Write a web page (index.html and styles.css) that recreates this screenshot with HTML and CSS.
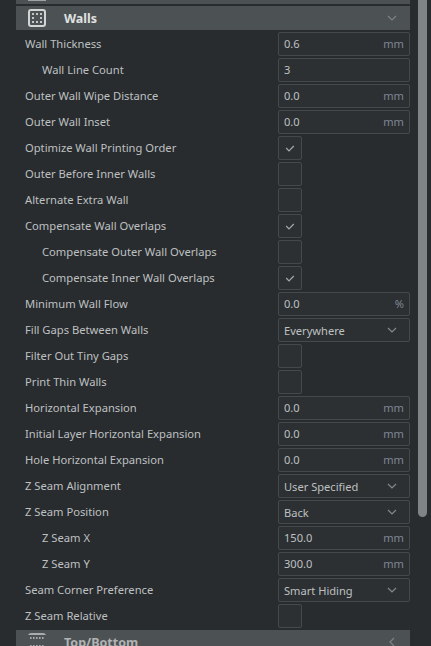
FILE: index.html
```html
<!DOCTYPE html>
<html lang="en">
<head>
<meta charset="utf-8">
<title>Print settings</title>
<link rel="stylesheet" href="styles.css">
</head>
<body>
<main class="panel">
  <div class="list" id="list">
    <div class="category previous"><span class="stub"></span></div>
    <div class="category">
      <svg class="cat-icon" width="18" height="18" viewBox="0 0 18 18"><rect x="1" y="1" width="16" height="16" rx="2" fill="none" stroke="#d3d4d4" stroke-width="2"/><path d="M4 5h2M8 5h2M12 5h2M4 9h2M12 9h2M4 13h2M8 13h2M12 13h2" stroke="#c4c6c6" stroke-width="2"/></svg>
      <h2 class="title">Walls</h2>
      <svg class="chevron" width="10" height="10" viewBox="0 0 10 10"><path d="M1 3l4 4 4-4"/></svg>
    </div>
    <div class="settings" id="settings"></div>
    <div class="category next">
      <svg class="cat-icon" width="18" height="18" viewBox="0 0 18 18"><path d="M0 2Q1 0 3 0H15Q17 0 18 2Z" fill="#aaacac"/><path d="M2 5h1.6M5 5h1.6M8 5h1.6M11 5h1.6M14 5h1.6M2 13h1.6M5 13h1.6M8 13h1.6M11 13h1.6M14 13h1.6" stroke="#a4a7a7" stroke-width="2"/></svg>
      <h2 class="title">Top/Bottom</h2>
      <svg class="chevron" width="10" height="10" viewBox="0 0 10 10"><path d="M7 1L3 5l4 4"/></svg>
    </div>
  </div>
  <div class="scrollbar"></div>
</main>
<script src="script.js"></script>
</body>
</html>
```
FILE: styles.css
```css
* { box-sizing: border-box; }
body {
  margin: 0;
  height: 646px;
  overflow: hidden;
  background: #282c2f;
  color: #bfc0c1;
  font: 11.2px/24px "Noto Sans", sans-serif;
}
.panel {
  display: flex;
  align-items: flex-start;
  gap: 8px;
  padding-left: 16px;
}
.list {
  display: flex;
  flex-direction: column;
  gap: 2px;
  width: 394px;
}
.category {
  display: flex;
  align-items: center;
  height: 24px;
  padding: 0 13px 0 12px;
  background: #4c5153;
}
.previous { height: 4px; align-items: flex-start; }
.stub { width: 18px; height: 1px; background: #a0a2a3; }
.cat-icon { flex: none; margin-right: 18px; }
.title {
  flex: 1;
  margin: 0;
  padding-top: 2px;
  font-size: 12.5px;
  font-weight: 700;
  color: #e0e1e1;
}
.next .title { color: #b1b3b4; }
.chevron { flex: none; fill: none; stroke: #85898b; stroke-width: 1.2; }
.category .chevron { stroke: #7e8284; }
.settings { display: grid; gap: 2px; }
.row {
  display: flex;
  justify-content: space-between;
  height: 24px;
  padding-left: 9px;
  white-space: nowrap;
}
.child { padding-left: 26px; }
.slot { width: 132px; }
.control {
  display: flex;
  align-items: center;
  justify-content: space-between;
  height: 24px;
  padding: 0 5px;
  border: 1px solid #46494c;
  border-radius: 2px;
  background: #2c3033;
  font-size: 11.1px;
}
.unit { color: #7f8592; }
.select { padding-right: 12px; }
.select span { padding-top: 2px; }
.check { width: 24px; justify-content: center; padding: 0 1px 0 0; }
.tick { fill: none; stroke: #a5a8a9; stroke-width: 1.2; }
.scrollbar {
  width: 9px;
  height: 517px;
  border-radius: 0 0 5px 5px;
  background: #808486;
}
```
FILE: script.js
```js
const rows = [
  ["Wall Thickness", "input", "0.6", "mm"],
  ["Wall Line Count", "input", "3", "", true],
  ["Outer Wall Wipe Distance", "input", "0.0", "mm"],
  ["Outer Wall Inset", "input", "0.0", "mm"],
  ["Optimize Wall Printing Order", "check", true],
  ["Outer Before Inner Walls", "check", false],
  ["Alternate Extra Wall", "check", false],
  ["Compensate Wall Overlaps", "check", true],
  ["Compensate Outer Wall Overlaps", "check", false, "", true],
  ["Compensate Inner Wall Overlaps", "check", true, "", true],
  ["Minimum Wall Flow", "input", "0.0", "%"],
  ["Fill Gaps Between Walls", "select", "Everywhere"],
  ["Filter Out Tiny Gaps", "check", false],
  ["Print Thin Walls", "check", false],
  ["Horizontal Expansion", "input", "0.0", "mm"],
  ["Initial Layer Horizontal Expansion", "input", "0.0", "mm"],
  ["Hole Horizontal Expansion", "input", "0.0", "mm"],
  ["Z Seam Alignment", "select", "User Specified"],
  ["Z Seam Position", "select", "Back"],
  ["Z Seam X", "input", "150.0", "mm", true],
  ["Z Seam Y", "input", "300.0", "mm", true],
  ["Seam Corner Preference", "select", "Smart Hiding"],
  ["Z Seam Relative", "check", false]
];
const chevron = '<svg class="chevron" width="10" height="10" viewBox="0 0 10 10"><path d="M1 3l4 4 4-4"/></svg>';
const tick = '<svg class="tick" width="10" height="10" viewBox="0 0 10 10"><path d="M1.2 5l2.8 2.8L8.8 3"/></svg>';
const content = {
  input: (value, unit) => `<span>${value}</span><span class="unit">${unit || ""}</span>`,
  select: value => `<span>${value}</span>${chevron}`,
  check: value => value ? tick : ""
};
document.getElementById("settings").innerHTML = rows.map(([label, type, value, unit, child]) =>
  `<div class="row${child ? " child" : ""}"><span>${label}</span><div class="slot"><div class="control ${type}">${content[type](value, unit)}</div></div></div>`
).join("");
```
